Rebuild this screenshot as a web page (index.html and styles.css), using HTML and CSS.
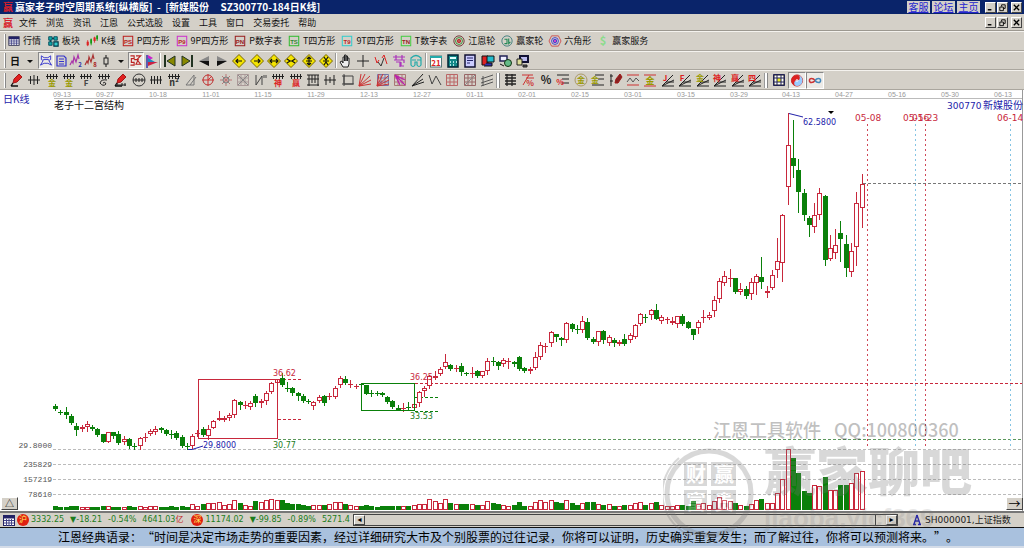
FILE: index.html
```
<!DOCTYPE html>
<html lang="zh-CN">
<head>
    <meta charset="utf-8">
    <title>赢家老子时空周期系统</title>
    <link rel="stylesheet" href="styles.css">
</head>
<body>
    <header class="titlebar">
        <span class="logo">赢</span>
        <h1>赢家老子时空周期系统[纵横版]  -  [新媒股份     SZ300770-184日K线]</h1>
        <nav class="site-links">
            <a href="#">客服</a>
            <a href="#">论坛</a>
            <a href="#">主页</a>
        </nav>
        <div class="win-buttons">
            <button type="button" aria-label="最小化"><svg viewBox="0 0 10 10"><path d="M2 7.5h4" stroke-width="1.6"/></svg></button>
            <button type="button" aria-label="还原"><svg viewBox="0 0 10 10"><path d="M4 4V2h4v4H6M2 4.500h4v4H2z"/></svg></button>
            <button type="button" class="close" aria-label="关闭"><svg viewBox="0 0 10 10"><path d="M2 2l6 6M8 2L2 8" stroke-width="1.400"/></svg></button>
        </div>
    </header>

    <div class="menubar">
        <span class="logo">赢</span>
        <nav class="menu">
            <button type="button">文件</button>
            <button type="button">浏览</button>
            <button type="button">资讯</button>
            <button type="button">江恩</button>
            <button type="button">公式选股</button>
            <button type="button">设置</button>
            <button type="button">工具</button>
            <button type="button">窗口</button>
            <button type="button">交易委托</button>
            <button type="button">帮助</button>
        </nav>
        <div class="win-buttons">
            <button type="button" aria-label="最小化"><svg viewBox="0 0 10 10"><path d="M2 7.5h4" stroke-width="1.6"/></svg></button>
            <button type="button" aria-label="还原"><svg viewBox="0 0 10 10"><path d="M4 4V2h4v4H6M2 4.500h4v4H2z"/></svg></button>
            <button type="button" class="close" aria-label="关闭"><svg viewBox="0 0 10 10"><path d="M2 2l6 6M8 2L2 8" stroke-width="1.400"/></svg></button>
        </div>
    </div>

    <div class="toolbar named" id="bar1"></div>
    <div class="toolbar" id="bar2"></div>
    <div class="toolbar" id="bar3"></div>

    <main class="chart">
        <svg id="kline" viewBox="0 90 1024 421"></svg>
        <button type="button" class="corner left" aria-label="展开">△</button>
        <button type="button" class="corner right" aria-label="向右">→</button>
        <svg class="watermark" viewBox="0 0 320 132" aria-hidden="true">
            <text x="50" y="21" class="wm-qq">江恩工具软件</text>
            <text x="171" y="21" class="wm-qq">QQ:100800360</text>
            <circle cx="46" cy="77" r="42" class="wm-ring"/>
            <path d="M16 42a46 46 0 0 0 12 78" class="wm-arc"/>
            <path d="M21 46h23v24H21zM48 46h25v24H48zM21 74h23v24H21zM48 74h25v24H48z" class="wm-tile"/>
            <text x="23" y="66" class="wm-char">财</text>
            <text x="51" y="66" class="wm-char">赢</text>
            <text x="23" y="94" class="wm-char">富</text>
            <text x="51" y="94" class="wm-char">贵</text>
            <text x="101" y="75" class="wm-big">赢家聊吧</text>
            <text x="101" y="111" class="wm-url">jiaoba.yicf369</text>
        </svg>
    </main>

    <div class="statusbar">
        <svg class="sheet" viewBox="0 0 12 11"><rect x=".5" y=".5" width="11" height="10" fill="#fff" stroke="#226"/><path d="M0 2h12" stroke="#226" stroke-width="3"/><path d="M1 5.500h10M1 8h10M3.500 4v7M6 4v7M8.500 4v7" stroke="#448"/></svg>
        <span class="market">沪</span>
        <span class="quote">3332.25</span>
        <span class="quote">▼-18.21</span>
        <span class="quote">-0.54%</span>
        <span class="quote">4641.03<em>亿</em></span>
        <span class="market">深</span>
        <span class="quote">11174.02</span>
        <span class="quote">▼-99.85</span>
        <span class="quote">-0.89%</span>
        <span class="quote last">5271.4</span>
        <div class="scroller">
            <button type="button" aria-label="左移">◂</button>
            <div class="thumb"></div>
            <button type="button" aria-label="右移">▸</button>
        </div>
        <div class="index">
            <svg viewBox="0 0 10 12"><path d="M5 1L2 10M5 1l3 9M3 7h4M1 10.500h3M6 10.500h3" stroke="#22a" stroke-width="1.300" fill="none"/></svg>
            <span>SH000001,上证指数</span>
        </div>
    </div>

    <footer class="saying">江恩经典语录：“时间是决定市场走势的重要因素，经过详细研究大市及个别股票的过往记录，你将可以证明，历史确实重复发生；而了解过往，你将可以预测将来。”。</footer>

    <script src="script.js"></script>
</body>
</html>
```
FILE: styles.css
```
* { box-sizing: border-box; }
body {
    margin: 0;
    background: #d4d0c8;
    color: #111;
    font: 9px/12px "Noto Sans CJK SC", sans-serif;
}
button { margin: 0; padding: 0; border: 0; background: none; color: inherit; font: inherit; }

.titlebar, .menubar, .toolbar, .statusbar { display: flex; align-items: center; }
.titlebar { height: 15px; padding: 0 2px 0 3px; background: #0a246a; border-bottom: 1px solid #d4d0c8; }
.titlebar h1 { flex: 1; margin: 0 0 0 2px; color: #fff; font-size: 10px; font-weight: bold; white-space: pre; }
.logo { width: 10px; color: #d8202c; font-size: 10px; font-weight: bold; }
.site-links { display: flex; gap: 2px; margin-right: 5px; }
.site-links a { width: 23px; height: 12px; background: #d4d0c8; color: #2424d0; font-size: 10px; line-height: 12px; text-align: center; }
.win-buttons { display: flex; gap: 1px; }
.win-buttons button, .corner, .scroller button {
    background: #d4d0c8;
    border: 1px solid;
    border-color: #fff #444 #444 #fff;
}
.win-buttons button { width: 11px; height: 11px; }
.win-buttons .close { margin-left: 2px; }
.win-buttons svg { display: block; width: 9px; height: 9px; fill: none; stroke: #000; }

.menubar { height: 16px; padding: 0 2px 0 3px; border-bottom: 1px solid #9c9890; }
.menu { display: flex; flex: 1; gap: 9px; margin-left: 6px; }

.toolbar { height: 20px; padding-left: 4px; border-top: 1px solid #f4f2ee; border-bottom: 1px solid #aaa69e; }
#bar2 { height: 19px; }
.grip { width: 2px; height: 15px; margin-right: 2px; border-left: 1px solid #fff; border-right: 1px solid #888; }
.sep { width: 2px; height: 15px; border-left: 1px solid #999; border-right: 1px solid #fff; }
.group { display: grid; grid-auto-flow: column; grid-auto-columns: 1fr; }
.group button { height: 17px; }
.group svg { display: block; width: 14px; height: 14px; margin: 0 auto; overflow: visible; fill: none; stroke: #222; }
.group svg text { stroke: none; fill: #222; font-weight: bold; }
.group .on { background: #eceae6; border: 1px solid; border-color: #888 #fff #fff #888; }
.group .on svg { height: 13px; }
.named .items { display: flex; gap: 6px; }
.named button { display: flex; align-items: center; gap: 3px; white-space: nowrap; }
.named svg { width: 12px; height: 12px; overflow: visible; fill: none; }
.w-view { width: 151px; }
.w-move { width: 174px; }
.w-mark { width: 88px; }
.w-util { width: 104px; }
.w-draw { width: 488px; }
.w-line { width: 262px; }
.w-last { width: 54px; }

.chart { position: relative; background: #fff; }
#kline { display: block; width: 100%; }
#kline text { font: 8px "DejaVu Sans", "Noto Sans CJK SC", sans-serif; }
#kline .tick { font: 7px "Liberation Sans", sans-serif; fill: #999; text-anchor: middle; }
#kline .scale { font-family: "Liberation Mono", monospace; fill: #555; text-anchor: end; }
#kline .name { font: 10px "Noto Sans CJK SC", sans-serif; }
#kline .code, #kline .day { font-size: 9px; }
.corner { position: absolute; bottom: 1px; width: 17px; height: 13px; color: #000; line-height: 10px; }
.corner.left { left: 1px; }
.corner.right { right: 1px; font-size: 12px; }

.watermark { position: absolute; left: 64.7%; top: 326px; width: 320px; height: 132px; pointer-events: none; z-index: 2; opacity: .28; fill: #777; }
.wm-qq { font: 500 18px "Noto Sans CJK SC", sans-serif; fill: #222; }
.wm-ring { fill: none; stroke: #777; stroke-width: 5px; }
.wm-arc { fill: none; stroke: #777; stroke-width: 2px; }
.wm-char { font: bold 20px "Noto Sans CJK SC", sans-serif; fill: #fff; }
.wm-big { font: 900 52px "Noto Sans CJK SC", sans-serif; }
.wm-url { font: bold 26px "Liberation Sans", sans-serif; opacity: .6; }

.statusbar { height: 16px; padding-left: 3px; border-top: 2px solid #777; color: #1c7c1c; font-family: "DejaVu Sans", "Noto Sans CJK SC", sans-serif; font-size: 8px; white-space: nowrap; }
.sheet { width: 12px; height: 11px; }
.market { width: 12px; height: 12px; margin: 0 2px; border-radius: 50%; background: #e02010; color: #fff060; text-align: center; line-height: 12px; }
.quote { margin-right: 6px; }
.quote.last { margin-right: 3px; }
.quote em { color: #c02020; font-style: normal; }
.scroller { display: flex; flex: 1; height: 12px; border: 1px solid #444; }
.scroller button { width: 11px; color: #000; line-height: 8px; }
.thumb { flex: 1; margin-right: 10px; border-right: 1px solid #444; }
.index { display: flex; align-items: center; gap: 3px; width: 126px; padding-left: 14px; color: #222; font-size: 9px; }
.index svg { width: 10px; height: 12px; }

.saying { height: 21px; padding-left: 58px; border-top: 1px solid #111; border-bottom: 2px solid #d4dce8; background: #a9c1de; color: #000; font-size: 12px; line-height: 18px; text-spacing-trim: space-all; white-space: nowrap; overflow: hidden; }
```
FILE: script.js
```
const RED = '#c8283c', GREEN = '#0a800a', BLUE = '#2222aa';

// ---- icons ----
const p = (d, c = '#222', w = 1, f = 'none') => `<path d="${d}" stroke="${c}" stroke-width="${w}" fill="${f}"/>`;
const t = (s, c = '#222', size = 9, x = 7, y = 13) => `<text x="${x}" y="${y}" text-anchor="middle" font-size="${size}" style="fill:${c}">${s}</text>`;
const ring = (r, c, f = 'none') => `<circle cx="7" cy="7" r="${r}" stroke="${c}" fill="${f}"/>`;
const comb = p('M1 3.500h12M2.500 1v5M5.500 1v5M8.500 1v5M11.500 1v5');
const fan = p('M1 13L12 2M1 13l12-6M1 13h12M5 9h8');
const tag = (s, c, tc) => `<rect x="1.500" y="1.500" width="11" height="11" stroke="${c}" stroke-width="1.200"/>` +
    `<text x="7" y="10" text-anchor="middle" font-family="Liberation Sans" font-weight="bold" font-size="7" fill="${tc}">${s}</text>`;
const sheet = '<rect x="1" y="2" width="12" height="10" fill="#fff" stroke="#224"/>' + p('M1 3.500h12', '#226', 3) + p('M1 7h12M1 9.500h12M4 5v7M7 5v7M10 5v7', '#448');
const diamond = d => p('M7 .500L13.500 7 7 13.500 .500 7z', '#776600', 1, '#f4e400') + p(d, '#111', 1.2);
const pen = p('M3 10l1-4 5-5 3 3-5 5z', '#a01818', 1, '#e02020') + p('M1 13h7M3 10l-2 3', '#111', 1.3);
const grid = c => p('M1.500 1.500h11v11h-11zM1 5h12M1 9h12M5 1v12M9 1v12', c);
const rays = c => p('M1 13L3 1M1 13L7 1M1 13l11-10M1 13l12-6M1 13l12-2', c);

const named = [
    ['行情', sheet],
    ['板块', p('M2 2h4v4H2zM8 2h4v4H8zM2 8h4v4H2z', '#045', 1, '#1aa') + p('M8 8h5v5H8zM6 4h2M4 6v2', '#034', 1.3, '#3cc')],
    ['K线', p('M2 6v7M10 2v7', '#d22', 1) + p('M2 8v4M10 3v4', '#d22', 2.5) + p('M6 4v8M13 0v7', '#191', 1) + p('M6 5v5M13 1v4', '#191', 2)],
    ['P四方形', tag('PS', '#b22', '#b22')], ['9P四方形', tag('P9', '#c3c', '#b22')],
    ['P数字表', tag('PN', '#922', '#922')], ['T四方形', tag('TS', '#3b3', '#383')],
    ['9T四方形', tag('T9', '#3cc', '#b22')], ['T数字表', tag('TN', '#4c4', '#922')],
    ['江恩轮', ring(6, '#622') + ring(4, '#282') + ring(2, '#b22', '#b55')],
    ['赢家轮', ring(6, '#377') + p('M4 5h3v5H4M9 4v6l2-2', '#285', 1.3)],
    ['六角形', p('M3 1h8l3 6-3 6H3L0 7z', '#c44') + ring(4, '#33c') + ring(2, '#33c', '#c4c')],
    ['赢家服务', '<text x="7" y="12" text-anchor="middle" font-size="13" font-weight="bold" fill="#8bdc8b">$</text>']
];

const view = [
    [t('日', '#111', 10, 7, 11)], [p('M4 6h6L7 9z', 'none', 0, '#111')],
    [p('M2 2l3 2h4l3-2v4l-2 1 3 5-4-2H5l-4 2 3-5-2-1zM4 6h6', '#33c'), 1],
    [p('M3 2h7l2 2v8H3zM5 5h5M5 7.500h5M5 10h5', '#33c', 1.2)],
    [p('M1 11l2-4 1 2 1-6 2 5 2-7 1 4', '#a3a', 1.2) + t('2', '#33a', 6, 11, 13)],
    [p('M1 11l2-4 1 2 1-6 2 5 2-7 1 4', '#a33', 1.2) + t('8', '#a22', 6, 11, 13)],
    [p('M7 1v12', '#111') + '<rect x="5" y="4" width="4" height="6" fill="#d4d0c8"/>'],
    [p('M4 6h6L7 9z', 'none', 0, '#111')],
    [p('M1 2h4v3H2v4h3v3H1M7 2h5l-4 4 4 5H7l2-4M5 6h5', '#b22', 1.2), 1],
    [p('M2 1v13', '#33a', 1.5) + p('M3 1l5 3-5 3z', 'none', 0, '#c2c') + p('M3 4l7 4H3z', 'none', 0, '#28b') + p('M3 8h10L3 12z', 'none', 0, '#c24')]
];
const move = [
    p('M2 1v12', '#232', 2) + p('M12 2v10L4 7z', '#232', 1, '#880'), p('M12 1v12', '#232', 2) + p('M2 2v10l8-5z', '#232', 1, '#880'),
    p('M12 2v10L2 7z', 'none', 0, '#888') + p('M2 7h10v5z', 'none', 0, '#111'), p('M2 2v10l10-5z', 'none', 0, '#888') + p('M2 7h10L2 12z', 'none', 0, '#111'),
    diamond('M10 7H4M6 5L4 7l2 2'), diamond('M4 7h6M8 5l2 2-2 2'), diamond('M3 7h8M5 5L3 7l2 2M9 5l2 2-2 2'),
    diamond('M3 5l3 2-3 2M11 5L8 7l3 2M6 7h2'), diamond('M7 3v8M5 5l2-2 2 2M5 9l2 2 2-2M4 7h6'), diamond('M5 3l2 3 2-3M5 11l2-3 2 3M4 7h6')
];
const mark = [
    p('M4 13L1 8l2-1 1 2V3h1.500v4V1H7v6V2h1.500v5V4H10v6l-1 3z', '#222', 1, '#eee'), p('M7 1v12M1 7h12'),
    p('M1 3l2 6 2-3M8 4l2-3 3 9', '#d22') + p('M4 8l3 4 3-8', '#333'),
    p('M1 3h12M4 1v5M10 1v5M2 6h10v3M4 8h4v5M9 8v4h3', '#a3b', 1.2),
    p('M2 4q5-5 10 0v7q-2 3-4 0V8H6v3q-2 3-4 0zM3 6h4M8 6h4', '#2aa', 1.2)
];
const util = [
    '<rect x="1.500" y="2" width="11" height="11" fill="#fff" stroke="#577"/>' + p('M1 3h12', '#2aa', 2) + t('21', '#d22', 8, 7, 12),
    p('M2 1h10v12H2z', '#023', 1.5, '#188') + p('M4 4h6', '#dff', 2) + p('M4 8h1M7 8h1M10 8h1M4 11h1M7 11h1', '#dff', 1.5),
    p('M2 1h10v12H2z', '#113', 1.5, '#ccf') + p('M4 4h6M4 6.500h6M4 9h3', '#226'),
    p('M1 2h6v9H1z', '#111', 1, '#d22') + p('M6 2h7v6H6z', '#111', 1, '#2bc') + p('M3 12h8V9H5', '#111', 1, '#33a'),
    p('M2 2h7v5H2z', '#225', 1.5, '#eef') + '<circle cx="10" cy="9" r="3.500" fill="#6b8" stroke="#131"/>' + p('M2 10l4 2', '#111'),
    p('M5 2h8v6H5z', '#113', 2, '#bbe') + p('M2 5h5v6H2z', '#222', 1, '#dd9') + p('M8 11h4v2H8z', '#222', 1, '#555')
];
const draw = [
    pen, p('M1 7h12M3.500 3v8M7 2v10M10.500 3v8'), comb + t('金', '#990', 8), comb + t('金', '#990', 8),
    comb + t('F', '#444', 8), comb + p('M10 7q-6-1-7 3 3 4 6 1-1-3-3-1'), pen + p('M3 10v3M8 10v3M11 10v3M3 12h9'),
    ring(6, '#333') + p('M1 7h12M4 5v4M7 5v4M10 5v4'), p('M1 7h12M2.500 3v8M5.500 3v8M8.500 3v8M11.500 3v8'), comb + t('n²', '#333', 9),
    p('M2 12L10 2v10zM6 12L12 4', '#777'), ring(5, '#b33') + p('M7 1v12M1 7h12M7 7l4-4', '#c33'),
    p('M7 1v12M1 7h12M3 3l8 8M11 3l-8 8', '#b77') + ring(3, '#788'), grid('#a99') + p('M2 2l10 10M12 2L2 12', '#888'),
    p('M2 2v10L8 3v9M10 2v3M12 2v3', '#444'), comb + t('神', '#d22', 8), comb + t('赢', '#d22', 8),
    p('M1 2h12M1 6h12M3 2v11M6 2v8M9 2v8M12 2v11M1 12h12'), p('M3 2v10M7 4v6M11 2v10M1 7h12'),
    p('M3 3h9v8H3zM1 3h3M1 11h12M3 1v12', '#444'), rays('#c33'), grid('#77a') + rays('#c33'), grid('#a77') + p('M2 2l10 10M2 2l10 5M2 2l5 10', '#b2a', 1.3),
    p('M1 13L12 1M1 13l11-7M1 13l12-4'), p('M1 2l3 9 4-8 5 9', '#444'), grid('#b66'), grid('#966') + p('M2 12L12 2', '#888'), p('M1 6l12-4M1 10l12-4M1 13l12-4M3 3v10', '#555')
];
const fanText = (s, c) => fan + t(s, c, 8, 4, 8);
const line = [
    p('M3 1v12M8 1v12M1 2h11M1 5h11M1 8h11M1 11h11', '#222', 1.3), p('M1 2h11M2 12L8 2M5 5h8', '#c33') + t('%', '#c33', 8, 9), `<text x="7" y="11" text-anchor="middle" font-size="11">%</text>`,
    p('M1 2h12M6 6h7M6 10h7') + t('%', '#d22', 8, 4, 12), ring(6, '#a96') + t('金', '#990', 8, 7, 10), p('M4 2h9M7 6h6M1 12h12') + t('金', '#990', 8, 4, 10),
    p('M2 1v12M1 3h3M1 8h3') + p('M6 10l1-4 4-5 2 3-4 6z', '#a01818', 1, '#822'), p('M1 2h12M1 12h12', '#c33') + p('M1 9l3-4 3 4 3-4 3 3', '#555'),
    p('M1 2h12M1 13h12', '#c33') + t('金', '#990', 9, 7, 11), fanText('J', '#d22'), fanText('F', '#d22'), fanText('金', '#990'), fanText('神', '#d22'), fanText('赢', '#d22'), fanText('四', '#d22')
];
const last = [
    ['<rect x="2" y="2" width="10" height="10" fill="#fff"/>' + p('M5 5h4v4H5z', 'none', 0, '#ee2') + grid('#225')],
    [ring(6, '#c22', '#d22') + p('M7 1a6 6 0 0 1 0 12a3 3 0 0 1 0-6a3 3 0 0 0 0-6', 'none', 0, '#9cf') + ring(1, '#fff'), 1],
    [p('M7 7C5 4 1 4 1 7s4 3 6 0', '#c33', 1.6) + p('M7 7c2-3 6-3 6 0s-4 3-6 0', '#48b', 1.6), 1]
];

const svg = inner => `<svg viewBox="0 0 14 14">${inner}</svg>`;
const group = (cls, list) => `<div class="group ${cls}">` + list.map(i => Array.isArray(i) ? i : [i])
    .map(([inner, on]) => `<button type="button"${on ? ' class="on"' : ''}>${svg(inner)}</button>`).join('') + '</div>';
const grip = '<span class="grip"></span>', sep = '<span class="sep"></span>';

document.getElementById('bar1').innerHTML = grip + '<div class="items">' +
    named.map(([name, icon]) => `<button type="button">${svg(icon)}${name}</button>`).join('') + '</div>';
document.getElementById('bar2').innerHTML = grip + group('w-view', view) + sep + group('w-move', move) + sep + group('w-mark', mark) + sep + group('w-util', util);
document.getElementById('bar3').innerHTML = grip + group('w-draw', draw) + sep + grip + group('w-line', line) + sep + grip + group('w-last', last);

// ---- candles: colour, high, body top, body bottom, low ----
const candles = `g404,406,409,410 g410,412,413,414 g407,412,415,418 g414,416,423,424 g423,426,430,435 r425,427,429,431 r421,424,427,431
g425,427,429,430 g428,429,435,436 g434,434,442,442 r432,432,442,442 g432,432,436,438 g431,434,443,444 r436,439,442,444 g438,439,446,448
g443,446,447,449 r437,438,446,449 r433,437,438,441 r429,431,434,435 r426,429,432,434 g427,428,430,432 g429,430,434,435 g430,434,435,438
g431,433,438,439 g435,437,446,447 g443,446,447,449 r434,436,446,448 r430,433,434,436 g427,429,435,436 r425,429,436,439 r420,421,428,428
r411,418,420,420 r416,418,420,421 r413,415,418,420 r399,400,415,417 g401,402,405,409 r401,405,406,408 r401,403,407,409 g394,396,403,406
r399,401,403,407 r391,393,401,404 r382,383,392,393 r379,379,383,385 g373,378,385,386 g382,388,389,391 g387,388,393,395 g392,393,396,400
g394,396,401,402 g399,401,402,403 r401,402,406,409 r395,397,401,402 g395,396,403,405 r393,396,397,399 r386,388,397,398 r376,378,385,387
g376,379,383,384 r380,384,385,387 r384,386,387,388 g384,384,385,386 g385,385,394,394 g390,393,394,396 g391,393,394,395 g392,393,395,396
g396,397,402,403 g400,401,407,408 g405,408,410,410 r403,408,409,411 g402,407,408,410 r402,404,408,410 r391,392,403,406 r386,388,391,396
r375,376,386,388 r371,376,378,379 r367,369,374,375 r354,362,367,368 g364,365,369,370 r365,368,369,371 g363,366,372,375 g372,373,374,375
r367,373,374,377 g370,371,376,377 r371,371,376,377 r358,361,371,374 g357,361,362,365 g361,362,366,369 r358,360,364,366 r358,361,362,368
g361,362,364,366 g356,357,369,370 g367,368,371,372 r367,369,371,373 r352,357,368,369 r342,345,357,359 r343,346,347,352 r331,332,343,346
g334,334,337,341 g337,338,340,345 r322,323,340,342 g323,324,329,331 g325,329,330,333 r316,321,330,332 g318,322,338,339 g337,339,342,343
r331,331,342,345 g330,331,340,343 r335,337,343,345 g338,340,343,346 r340,342,344,345 g334,339,344,345 r333,335,340,342 r324,325,337,338
r313,314,324,325 g314,317,318,322 r309,310,315,319 g304,310,319,319 r315,317,321,323 r317,319,320,323 r317,321,323,324 r316,316,324,327
g314,316,324,325 g321,322,328,328 g329,329,335,339 r320,322,328,333 r310,317,318,322 r312,315,318,319 r296,300,311,316 r278,281,299,302
r271,276,283,285 r269,278,279,286 g278,278,292,293 r283,289,292,294 g286,289,296,298 r278,282,294,299 r274,276,283,294 g257,277,282,288
r286,291,293,297 r270,275,288,289 r238,261,270,277 r214,215,263,281 r113,145,187,204 g120,158,166,177 g159,170,192,212 g189,193,215,220
g216,218,225,236 r203,215,227,232 r188,193,215,219 g195,196,260,265 r235,248,259,260 r229,245,253,258 g221,233,239,261 g235,244,268,276
r243,251,272,276 r192,203,247,265 r174,184,208,227`.split(/\s+/);

const volumes = [3, 2, 2, 3, 3, 2, 2, 2, 2, 3, 3, 2, 2, 2, 3, 2, 3, 2, 3, 3, 2, 2, 3, 2, 3, 2, 5, 3, 5, 6, 6, 7, 4, 5, 9, 6, 4, 3, 8,
    7, 9, 10, 9, 9, 6, 5, 5, 4, 3, 4, 4, 4, 5, 7, 7, 5, 4, 3, 3, 4, 3, 2, 3, 3, 3, 3, 3, 3, 4, 5, 5, 10, 8, 6, 10, 6, 5, 5, 5, 5, 4, 4,
    8, 6, 5, 4, 3, 4, 7, 3, 3, 7, 9, 7, 9, 7, 6, 9, 6, 4, 6, 7, 7, 5, 4, 5, 3, 3, 4, 4, 6, 7, 4, 6, 7, 4, 3, 3, 4, 4, 3, 8, 5, 6, 4, 8,
    12, 9, 8, 6, 4, 3, 5, 9, 10, 6, 6, 16, 30, 60, 51, 36, 18, 16, 24, 23, 32, 19, 19, 24, 24, 26, 36, 38];

const text = (x, y, s, fill, cls = '') => `<text x="${x}" y="${y}" fill="${fill}" class="${cls}">${s}</text>`;
const dash = (x1, y1, x2, y2, c, d = '3 2') => `<path d="M${x1} ${y1}L${x2} ${y2}" stroke="${c}" stroke-dasharray="${d}"/>`;
const box = (x, y, w, h, c, f) => `<rect x="${x}" y="${y}" width="${w}" height="${h}" stroke="${c}" fill="${f}"/>`;

let out = '<path d="M54 98.500H1022" stroke="#bbb"/><path d="M1022.500 90V511" stroke="#999"/>';
['09-13', '09-27', '10-18', '11-01', '11-15', '11-29', '12-13', '12-27', '01-11', '02-01', '02-15', '03-01', '03-15', '03-29', '04-13', '04-27', '05-16', '05-30', '06-13']
    .forEach((d, i) => out += text(i == 0 ? 62 : Math.round(105 + (i - 1) * 52.8), 97, d, '#999', 'tick'));

// price and volume grid
[449.5, 464.5, 479.5, 494.5].forEach(y => out += dash(53, y, 1022, y, '#bbb'));
[['29.8000', 448], ['235829', 467], ['157219', 482], ['78610', 497]].forEach(([s, y]) => out += text(52, y, s, '#555', 'scale'));

out += dash(278, 439.5, 1022, 439.5, '#5c985c') + dash(415, 383.5, 1022, 383.5, RED) + dash(863, 183.5, 1022, 183.5, '#777');
out += dash(278, 379.5, 302, 379.5, RED) + dash(278, 419.5, 302, 419.5, RED);
out += dash(415, 397.5, 440, 397.5, GREEN) + dash(415, 411.5, 440, 411.5, GREEN);
[[867.5, '#d04858'], [915.5, '#84c4e4'], [925.5, '#d04858'], [1010.5, '#84c4e4']].forEach(([x, c]) => out += dash(x, 124, x, 448, c, '2 3'));

candles.forEach((row, i) => {
    const c = row[0] == 'r' ? RED : GREEN;
    const [hi, top, bot, lo] = row.slice(1).split(',').map(Number);
    const x = Math.round(55.2 + i * 5.27) + 0.5;
    const fill = row[0] == 'r' ? '#fff' : GREEN;
    out += `<path d="M${x} ${hi}V${lo + 1}" stroke="${c}"/>`;
    // open equals close: a plain cross bar
    if (bot - top <= 1) out += `<path d="M${x - 2.5} ${top + 0.5}h5" stroke="${c}"/>`;
    else out += box(x - 2, top + 0.5, 4, bot - top - 1, c, fill);
    out += box(x - 2, 509.5 - volumes[i], 4, volumes[i], c, fill);
});

out += box(198.5, 379.5, 79, 59, RED, 'none') + box(361.5, 383.5, 53, 27, GREEN, 'none');
out += `<path d="M789 113.500L803 117M188 449.500h4L203 446" stroke="${BLUE}" fill="none"/><path d="M828 111h6l-3 3z" fill="#000"/>`;
out += text(3, 103, '日K线', BLUE, 'name') + text(54, 109, '老子十二宫结构', '#111', 'name');
out += text(947, 109, '300770', BLUE, 'code') + text(983, 109, '新媒股份', BLUE, 'name');
out += text(803, 125, '62.5800', BLUE) + text(203, 448, '29.8000', BLUE);
out += text(273, 376, '36.62', RED) + text(273, 448, '30.77', '#1c7c1c') + text(410, 380, '36.25', RED) + text(410, 419, '33.53', '#1c7c1c');
out += text(855, 121, '05-08', RED, 'day') + text(903, 121, '05-16', RED, 'day') + text(912, 121, '05-23', RED, 'day') + text(997, 121, '06-14', RED, 'day');

document.getElementById('kline').innerHTML = out;
```
